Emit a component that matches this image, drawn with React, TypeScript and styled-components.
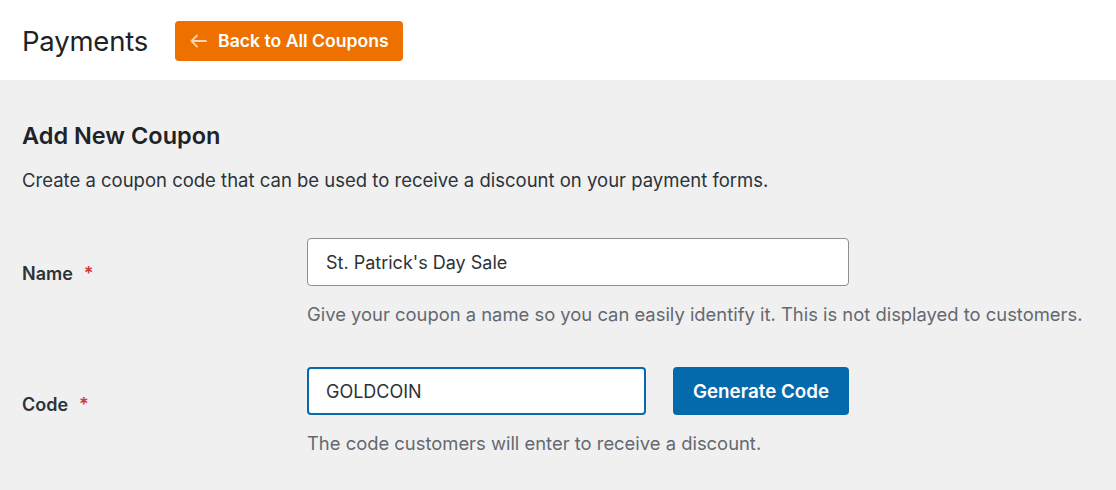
import React from "react";
import styled, { createGlobalStyle } from "styled-components";

const Global = createGlobalStyle`
  html, body { margin: 0; padding: 0; background: #f0f0f1; }
  body { font-family: Inter, "Noto Sans", sans-serif; -webkit-font-smoothing: antialiased; }
  * { box-sizing: border-box; }
`;

const Header = styled.header`
  height: 80px;
  background: #fff;
  display: flex;
  align-items: center;
  padding: 0 22px;
  gap: 27px;
`;

const Title = styled.h1`
  margin: 2px 0 0;
  font-size: 27.5px;
  font-weight: 400;
  color: #1d2327;
  letter-spacing: -0.2px;
`;

const BackButton = styled.button`
  display: flex;
  align-items: center;
  gap: 11px;
  height: 40px;
  padding: 0 14px 0 15px;
  margin-top: 1px;
  background: #ee7100;
  border: none;
  border-radius: 4px;
  color: #fff;
  font-family: inherit;
  font-size: 17.6px;
  font-weight: 600;
  cursor: pointer;
`;

const Main = styled.main`
  padding: 42px 22px 0;
`;

const SectionTitle = styled.h2`
  margin: 0;
  font-size: 23.5px;
  font-weight: 600;
  color: #1d2327;
  line-height: 28px;
`;

const Description = styled.p`
  margin: 18px 0 0;
  font-size: 18.5px;
  line-height: 24px;
  color: #2c3338;
`;

const Form = styled.div`
  margin-top: 46px;
  display: flex;
  flex-direction: column;
  gap: 41px;
`;

const Row = styled.div`
  display: grid;
  grid-template-columns: 285px 1fr;
`;

const Label = styled.label<{ $offset: number }>`
  padding-top: ${(p) => p.$offset}px;
  font-size: 18px;
  font-weight: 600;
  color: #2c3338;
  line-height: 24px;
`;

const Required = styled.span`
  color: #d63638;
  margin-left: 11px;
`;

const Field = styled.div`
  display: flex;
  flex-direction: column;
`;

const Controls = styled.div`
  display: flex;
  gap: 27px;
`;

const Input = styled.input<{ $w: number; $focus?: boolean }>`
  width: ${(p) => p.$w}px;
  height: 48px;
  font-family: inherit;
  font-size: 18px;
  color: #2c3338;
  background: #fff;
  border: ${(p) => (p.$focus ? "2px solid #056aab" : "1px solid #8c8f94")};
  padding: 1px 16px 0 ${(p) => (p.$focus ? 17 : 18)}px;
  border-radius: 4px;
  outline: none;
`;

const PrimaryButton = styled.button`
  width: 176px;
  height: 48px;
  padding-top: 2px;
  background: #056aab;
  color: #fff;
  border: none;
  border-radius: 4px;
  font-family: inherit;
  font-size: 18.8px;
  font-weight: 600;
  cursor: pointer;
`;

const Help = styled.p`
  margin: 16px 0 0;
  font-size: 18.4px;
  line-height: 24px;
  color: #646970;
`;

const Arrow = () => (
  <svg width="17" height="14" viewBox="0 0 17 14" fill="none" stroke="#fbd3b0" strokeWidth="1.8" strokeLinecap="round" strokeLinejoin="round">
    <path d="M16 7H1.5M7 1.5L1.5 7L7 12.5" />
  </svg>
);

export default function App() {
  return (
    <>
      <Global />
      <Header>
        <Title>Payments</Title>
        <BackButton>
          <Arrow />
          Back to All Coupons
        </BackButton>
      </Header>
      <Main>
        <SectionTitle>Add New Coupon</SectionTitle>
        <Description>
          Create a coupon code that can be used to receive a discount on your payment forms.
        </Description>
        <Form>
          <Row>
            <Label $offset={24}>
              Name<Required>*</Required>
            </Label>
            <Field>
              <Input $w={542} defaultValue="St. Patrick's Day Sale" />
              <Help>
                Give your coupon a name so you can easily identify it. This is not displayed to customers.
              </Help>
            </Field>
          </Row>
          <Row>
            <Label $offset={26}>
              Code<Required>*</Required>
            </Label>
            <Field>
              <Controls>
                <Input $w={339} $focus defaultValue="GOLDCOIN" />
                <PrimaryButton>Generate Code</PrimaryButton>
              </Controls>
              <Help>The code customers will enter to receive a discount.</Help>
            </Field>
          </Row>
        </Form>
      </Main>
    </>
  );
}
